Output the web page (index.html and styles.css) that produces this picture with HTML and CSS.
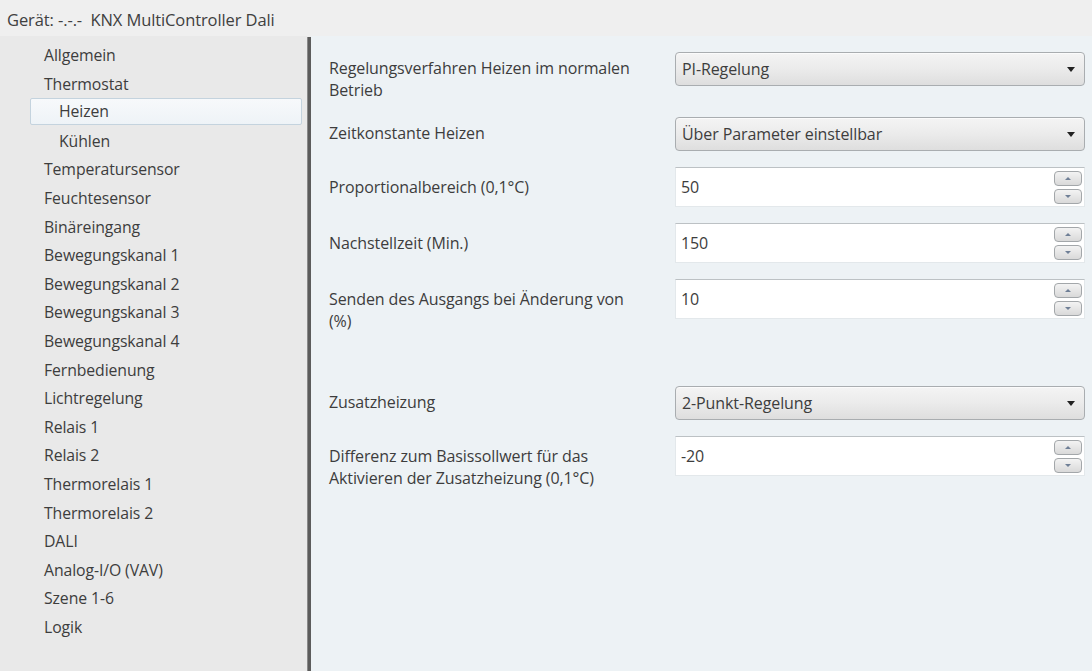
FILE: index.html
```html
<!DOCTYPE html>
<html lang="de">
<head>
<meta charset="utf-8">
<title>KNX MultiController Dali</title>
<link rel="stylesheet" href="styles.css">
</head>
<body>
<div class="app">
  <header class="titlebar">Gerät: -.-.-&nbsp; KNX MultiController Dali</header>
  <div class="main">
    <nav class="tree">
      <div class="node">Allgemein</div>
      <div class="node">Thermostat</div>
      <div class="node sub selected">Heizen</div>
      <div class="node sub">Kühlen</div>
      <div class="node">Temperatursensor</div>
      <div class="node">Feuchtesensor</div>
      <div class="node">Binäreingang</div>
      <div class="node">Bewegungskanal 1</div>
      <div class="node">Bewegungskanal 2</div>
      <div class="node">Bewegungskanal 3</div>
      <div class="node">Bewegungskanal 4</div>
      <div class="node">Fernbedienung</div>
      <div class="node">Lichtregelung</div>
      <div class="node">Relais 1</div>
      <div class="node">Relais 2</div>
      <div class="node">Thermorelais 1</div>
      <div class="node">Thermorelais 2</div>
      <div class="node">DALI</div>
      <div class="node">Analog-I/O (VAV)</div>
      <div class="node">Szene 1-6</div>
      <div class="node">Logik</div>
    </nav>
    <div class="splitter"></div>
    <section class="params">
      <div class="row">
        <div class="label sel-label">Regelungsverfahren Heizen im normalen Betrieb</div>
        <div class="select"><span>PI-Regelung</span><i class="arrow"></i></div>
      </div>
      <div class="row">
        <div class="label sel-label">Zeitkonstante Heizen</div>
        <div class="select"><span>Über Parameter einstellbar</span><i class="arrow"></i></div>
      </div>
      <div class="row">
        <div class="label num-label">Proportionalbereich (0,1°C)</div>
        <div class="number"><span>50</span><div class="spin"><b class="up"></b><b class="down"></b></div></div>
      </div>
      <div class="row">
        <div class="label num-label">Nachstellzeit (Min.)</div>
        <div class="number"><span>150</span><div class="spin"><b class="up"></b><b class="down"></b></div></div>
      </div>
      <div class="row">
        <div class="label num-label">Senden des Ausgangs bei Änderung von (%)</div>
        <div class="number"><span>10</span><div class="spin"><b class="up"></b><b class="down"></b></div></div>
      </div>
      <div class="row blank"></div>
      <div class="row">
        <div class="label sel-label">Zusatzheizung</div>
        <div class="select"><span>2-Punkt-Regelung</span><i class="arrow"></i></div>
      </div>
      <div class="row">
        <div class="label num-label">Differenz zum Basissollwert für das Aktivieren der Zusatzheizung (0,1°C)</div>
        <div class="number"><span>-20</span><div class="spin"><b class="up"></b><b class="down"></b></div></div>
      </div>
    </section>
  </div>
</div>
</body>
</html>
```
FILE: styles.css
```css
html, body {
  margin: 0;
  padding: 0;
  height: 100%;
}
body {
  font-family: "Open Sans", "Noto Sans", sans-serif;
  color: #3d3d3d;
  background: #eeeeee;
}
.app {
  display: flex;
  flex-direction: column;
  height: 671px;
  width: 1092px;
  overflow: hidden;
}
.titlebar {
  height: 36px;
  line-height: 40px;
  padding-left: 7px;
  font-size: 16.5px;
  letter-spacing: -0.1px;
  background: #efefef;
  color: #404040;
  box-sizing: border-box;
  white-space: nowrap;
}
.main {
  flex: 1;
  display: flex;
}
.tree {
  width: 307px;
  background: #e9e9e9;
  padding-top: 6px;
  box-sizing: border-box;
  font-size: 15.8px;
  letter-spacing: -0.1px;
}
.node {
  height: 28.6px;
  line-height: 27px;
  padding-left: 44px;
  box-sizing: border-box;
  white-space: nowrap;
}
.node.sub {
  padding-left: 59px;
}
.node.selected {
  margin-left: 30px;
  margin-right: 5px;
  padding-left: 28px;
  height: 27px;
  margin-top: -1px;
  margin-bottom: 2.6px;
  border: 1px solid #c4d3de;
  border-radius: 2px;
  background: linear-gradient(#f7f9fb, #eef3f7);
  line-height: 25px;
}
.splitter {
  width: 4px;
  margin-top: 1px;
  background: #5c5c5c;
  border-left: 1px solid #8a8a8a;
  box-sizing: border-box;
}
.params {
  flex: 1;
  background: #edf2f5;
  padding: 16px 6px 0 18px;
  display: flex;
  flex-direction: column;
  gap: 16px;
  font-size: 16px;
  letter-spacing: -0.1px;
}
.row {
  display: grid;
  grid-template-columns: 346px 410px;
  align-items: start;
}
.row.blank {
  height: 22px;
}
.label {
  line-height: 22px;
  padding-right: 34px;
}
.sel-label {
  padding-top: 5px;
}
.num-label {
  padding-top: 9px;
}
.select {
  height: 34px;
  box-sizing: border-box;
  border: 1px solid #a9adb0;
  border-radius: 4px;
  background: linear-gradient(#f4f4f4 0%, #ebebeb 50%, #dedede 100%);
  box-shadow: inset 0 1px 0 #fbfbfb;
  display: flex;
  align-items: center;
  justify-content: space-between;
  padding: 0 9px 0 6px;
}
.arrow {
  width: 0;
  height: 0;
  border-left: 4px solid transparent;
  border-right: 4px solid transparent;
  border-top: 5px solid #222;
}
.number {
  height: 40px;
  box-sizing: border-box;
  background: #ffffff;
  border: 1px solid #e3e8eb;
  border-top: 1px solid #bcc1c4;
  display: flex;
  align-items: center;
  justify-content: space-between;
  padding: 0 2px 0 5px;
}
.spin {
  display: flex;
  flex-direction: column;
  gap: 3px;
}
.spin b {
  width: 28px;
  height: 15px;
  box-sizing: border-box;
  border: 1px solid #a3a7aa;
  border-radius: 4px;
  background: linear-gradient(#f3f3f3, #d9d9d9);
  display: flex;
  align-items: center;
  justify-content: center;
}
.spin b::after {
  content: "";
  width: 0;
  height: 0;
  border-left: 3px solid transparent;
  border-right: 3px solid transparent;
}
.spin .up::after {
  border-bottom: 3px solid #6f7f96;
}
.spin .down::after {
  border-top: 3px solid #6f7f96;
}
```
